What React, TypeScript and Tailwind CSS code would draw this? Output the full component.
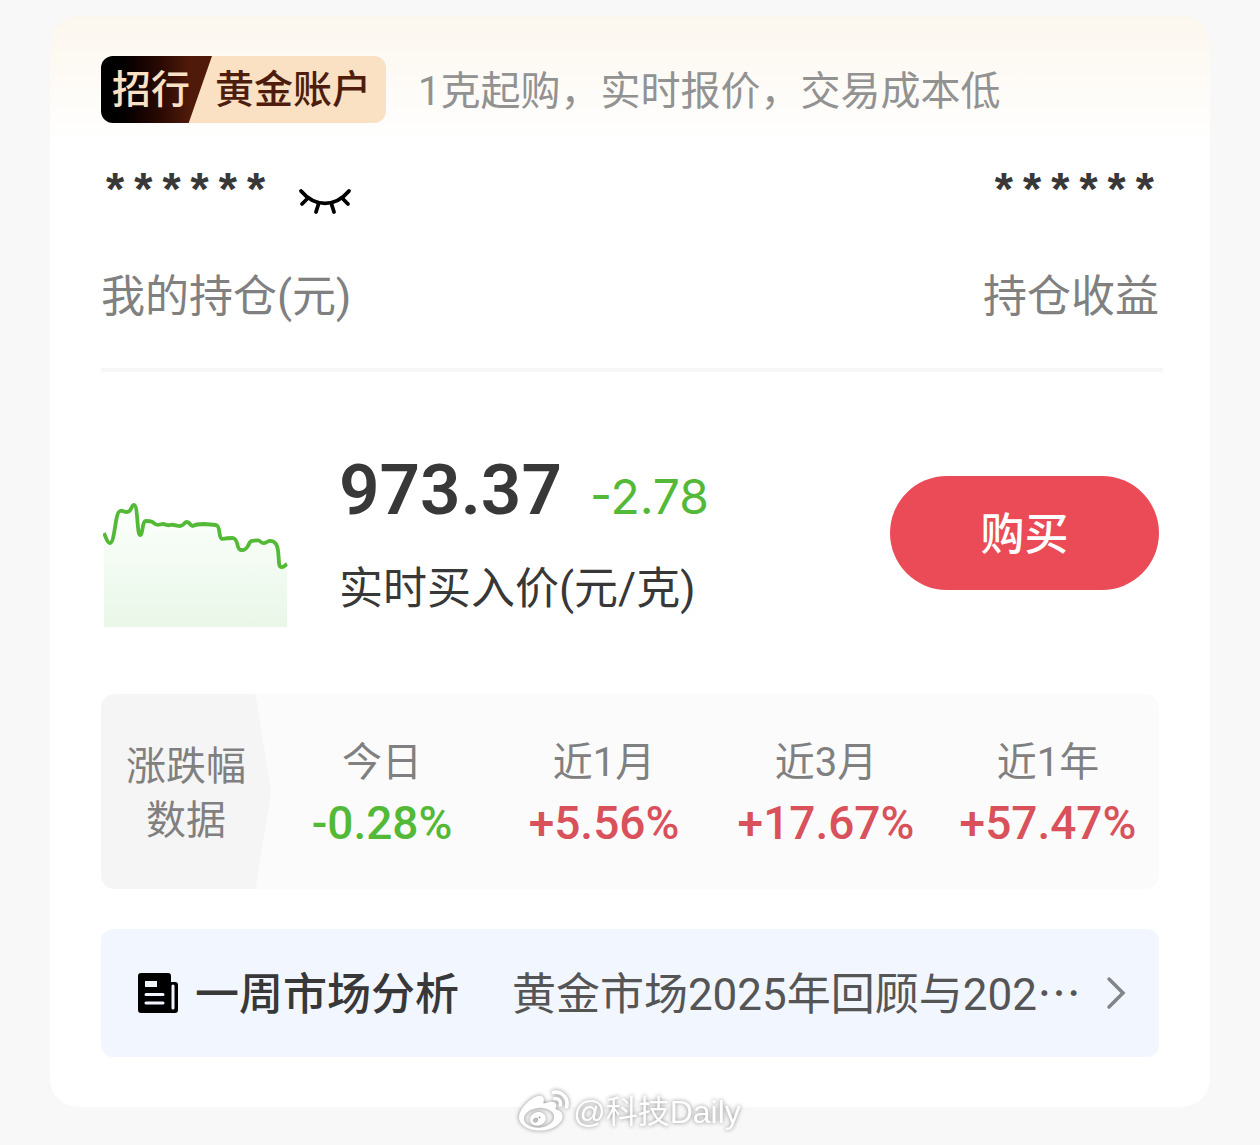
import { FaWeibo } from "react-icons/fa";

const stats = [
  { label: "今日", value: "-0.28%", up: false },
  { label: "近1月", value: "+5.56%", up: true },
  { label: "近3月", value: "+17.67%", up: true },
  { label: "近1年", value: "+57.47%", up: true },
];

function ClosedEye() {
  return (
    <svg width="54" height="28" viewBox="0 0 54 28" fill="none" stroke="#000" strokeWidth="3.8" strokeLinecap="round">
      <path d="M3 4C17 20.500 37 20.500 51 4" />
      <path d="M10 11L4 17M20.500 17L18 25M33.500 17L36 25M44 11L50 17" />
    </svg>
  );
}

function TrendChart() {
  const line =
    "M1 31C3 35 4 41 7 41C12 41 12 10 17 9C20 8 20 10 24 10C29 10 28 3 31 3C35 3 34 33 37 33C40 33 39 19 43 19C49 19 50 20 52 22C55 24 57 22 60 22C63 22 64 24 67 23C71 22 73 24 77 24C81 24 81 20 84 20C87 20 87 24 90 24C93 22 97 22 101 22L113 23C118 24 115 36 119 37C124 36 127 36 130 36C136 37 133 48 138 48C146 49 145 39 149 39C155 38 156 38 158 40C161 43 163 40 166 39C180 37 173 65 178 65C181 66 182 63 184 62";
  return (
    <svg width="186" height="126" viewBox="0 0 186 126" fill="none">
      <defs>
        <linearGradient id="trend" x1="0" y1="0" x2="0" y2="1">
          <stop offset="0" stopColor="#fcfffc" />
          <stop offset="1" stopColor="#e9f7e8" />
        </linearGradient>
      </defs>
      <path d={line + "V125H1Z"} fill="url(#trend)" />
      <path d={line} stroke="#53b937" strokeWidth="3.8" strokeLinejoin="round" />
    </svg>
  );
}

function NewsIcon() {
  return (
    <svg width="42" height="42" viewBox="0 0 42 42" fill="none">
      <path d="M4 1H31Q34 1 34 4V10H38Q41 10 41 13V38Q41 41 38 41H4Q1 41 1 38V4Q1 1 4 1Z" fill="#000" />
      <path d="M8 9H20V15H8Z" fill="#f2f6ff" />
      <path d="M9 22.500H26M9 31H26M36 14V36" stroke="#f2f6ff" strokeWidth="3" strokeLinecap="round" />
    </svg>
  );
}

export default function App() {
  return (
    <div className="relative min-h-screen bg-[#f8f8f8] px-[50px] pt-4 pb-[38px] font-[Roboto,'Noto_Sans_CJK_SC',sans-serif] text-[#383838]">
      <main className="rounded-[28px] bg-white bg-linear-to-b from-[#fcf7ee] to-white to-[130px] px-[51px] pt-10 pb-[50px]">
        <header className="flex items-center gap-8">
          <h1 className="flex h-[67px] shrink-0 overflow-hidden rounded-xl bg-[#fae1c4] text-[39px] leading-[68px] font-medium whitespace-nowrap">
            <span className="w-[111px] bg-linear-to-r from-black to-[#501a0a] to-80% pl-[11px] text-[#fae1c4] [clip-path:polygon(0_0,100%_0,79%_100%,0_100%)]">
              招行
            </span>
            <span className="w-[174px] pl-[3px] text-[#4e1d0e]">黄金账户</span>
          </h1>
          <p className="pt-1 text-[40px] leading-[60px] whitespace-nowrap text-[#929292]">1克起购，实时报价，交易成本低</p>
        </header>

        <section className="-mr-1 border-b-4 border-[#f7f7f7] pr-1 pb-[38px]">
          <div className="flex h-[142px] items-start justify-between pt-10 font-['Liberation_Mono',monospace] text-[47px] leading-[64px] font-bold">
            <div className="flex items-start gap-7">
              <span>******</span>
              <button type="button" aria-label="显示金额" className="mt-6 flex">
                <ClosedEye />
              </button>
            </div>
            <span>******</span>
          </div>
          <div className="flex justify-between text-[44px] leading-[65px] text-[#808080]">
            <span>我的持仓(元)</span>
            <span>持仓收益</span>
          </div>
        </section>

        <section className="flex h-[322px] items-center">
          <div className="ml-0.5 pt-16">
            <TrendChart />
          </div>
          <div className="ml-[50px]">
            <div className="flex items-baseline gap-7 leading-[88px]">
              <strong className="text-[71px] font-semibold">973.37</strong>
              <span className="font-[Inter,sans-serif] text-[48px] text-[#53b937]">-2.78</span>
            </div>
            <p className="mt-4 text-[44px] leading-[64px] whitespace-nowrap">实时买入价(元/克)</p>
          </div>
          <button type="button" className="ml-auto h-[114px] w-[269px] rounded-full bg-[#ea4b57] pt-1 text-[44px] font-medium text-white">
            购买
          </button>
        </section>

        <section className="flex overflow-hidden rounded-[14px] bg-[#fbfbfb]">
          <h2 className="flex h-[195px] w-[170px] shrink-0 items-center justify-center bg-[#f5f5f5] pt-1 text-center text-[40px] leading-[54px] text-[#808080] [clip-path:polygon(0_0,91%_0,100%_50%,91%_100%,0_100%)]">
            涨跌幅
            <br />
            数据
          </h2>
          <dl className="grid flex-1 grid-cols-4 items-center text-center">
            {stats.map((s) => (
              <div key={s.label} className="pt-0.5">
                <dt className="text-[40px] leading-[60px] text-[#808080]">{s.label}</dt>
                <dd className={s.up ? "text-[46px] leading-[60px] font-medium text-[#d9515a]" : "text-[46px] leading-[60px] font-medium text-[#53b937]"}>
                  {s.value}
                </dd>
              </div>
            ))}
          </dl>
        </section>

        <a href="#analysis" className="mt-10 flex h-32 items-center rounded-xl bg-[#f2f6ff] pr-8 pl-9 text-[44px] whitespace-nowrap">
          <NewsIcon />
          <strong className="ml-4 pt-1 font-medium">一周市场分析</strong>
          <span className="ml-auto pt-1 text-[#555]">黄金市场2025年回顾与202⋯</span>
          <svg className="ml-6" width="22" height="34" viewBox="0 0 22 34" fill="none" stroke="#838488" strokeWidth="3.500" strokeLinecap="round">
            <path d="M4 3L18 17L4 31" />
          </svg>
        </a>
      </main>

      <div className="absolute inset-x-0 bottom-2 flex items-center justify-center gap-1 font-['Liberation_Sans','Noto_Sans_CJK_SC',sans-serif] text-[32px] leading-[48px] text-white [filter:drop-shadow(0_0_2px_#888)]">
        <FaWeibo size={50} />
        <span>@科技Daily</span>
      </div>
    </div>
  );
}
